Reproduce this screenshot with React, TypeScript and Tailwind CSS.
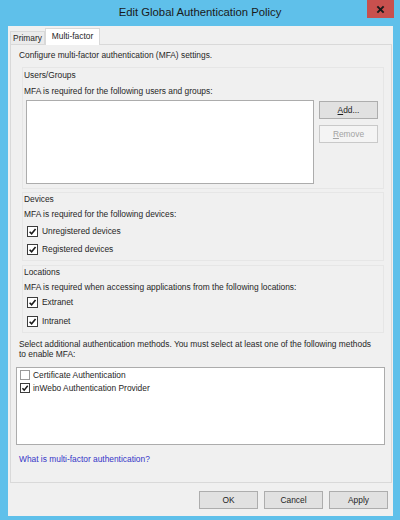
import React from 'react';

const Check: React.FC<{ checked: boolean; size?: string; light?: boolean }> = ({ checked, size = 'w-[11px] h-[11px]', light }) => (
  <span
    className={`${size} shrink-0 bg-white border ${light && !checked ? 'border-[#9a9a9a]' : 'border-[#3c3c3c]'} flex items-center justify-center`}
  >
    {checked && (
      <svg viewBox="0 0 10 10" className="w-full h-full">
        <path d="M1.8 5.2 L4 7.6 L8.4 2.2" fill="none" stroke="#1a1a1a" strokeWidth="1.8" />
      </svg>
    )}
  </span>
);

const Btn: React.FC<{ children: React.ReactNode; cls?: string }> = ({ children, cls = '' }) => (
  <div className={`h-[18px] w-[59px] flex items-center justify-center border border-[#adadad] bg-[#e1e1e1] text-[#1e1e1e] ${cls}`}>
    {children}
  </div>
);

const CheckRow: React.FC<{ label: string; cls?: string }> = ({ label, cls = '' }) => (
  <div className={`h-[16px] flex items-center pl-[3px] ${cls}`}>
    <Check checked />
    <span className="ml-[4px]">{label}</span>
  </div>
);

export default function App() {
  return (
    <div className="w-[400px] h-[520px] bg-[#5fc0ea] flex flex-col overflow-hidden font-['Liberation_Sans',Arial,sans-serif] text-[8.4px] leading-[12px] text-[#262626]">
      {/* title bar */}
      <div className="relative h-[26px] shrink-0 flex items-center justify-center">
        <span className="text-[11.3px] text-[#1a1a1a] leading-none">Edit Global Authentication Policy</span>
        <div className="absolute top-0 right-[6px] w-[27px] h-[18px] bg-[#c8504e] flex items-center justify-center">
          <svg viewBox="0 0 10 10" className="w-[9px] h-[9px]">
            <path d="M1.5 1.5 L8.5 8.5 M8.5 1.5 L1.5 8.5" stroke="#1a1a1a" strokeWidth="2.2" />
          </svg>
        </div>
      </div>

      {/* client */}
      <div className="flex-1 ml-[8px] mr-[7px] mb-[4px] bg-[#f0f0f0] flex flex-col">
        {/* tabs */}
        <div className="mt-[2px] h-[16px] flex items-end pl-[2px]">
          <div className="h-[13px] w-[35px] border border-b-0 border-[#d9d9d9] bg-[#ebebeb] flex items-center justify-center">
            Primary
          </div>
          <div className="relative z-10 -mb-px h-[17px] w-[55px] border border-b-0 border-[#d9d9d9] bg-white flex items-center justify-center pb-[2px]">
            Multi-factor
          </div>
        </div>

        {/* panel */}
        <div className="h-[439px] ml-[2px] mr-[1px] border border-[#d9d9d9] bg-[#f0f0f0] flex flex-col">
          <div className="mt-[4px] ml-[8px]">Configure multi-factor authentication (MFA) settings.</div>

          {/* Users/Groups */}
          <div className="mt-[6px] ml-[11px] mr-[7px] border border-[#e6e6e6] h-[122px] flex flex-col pl-[1px]">
            <div className="mt-[1px]">Users/Groups</div>
            <div className="mt-[4px]">MFA is required for the following users and groups:</div>
            <div className="mt-[3px] flex pl-[2px]">
              <div className="w-[288px] h-[84px] bg-white border border-[#acacac]" />
              <div className="ml-[5px] flex flex-col">
                <Btn cls="mt-[1px] h-[17px] border-[#7a7a7a]">
                  <span>
                    <span className="underline">A</span>dd...
                  </span>
                </Btn>
                <Btn cls="mt-[6px] h-[17px] bg-[#f4f4f4] border-[#c9c9c9] text-[#a3a3a3]">
                  <span>
                    <span className="underline">R</span>emove
                  </span>
                </Btn>
              </div>
            </div>
          </div>

          {/* Devices */}
          <div className="mt-[3px] ml-[11px] mr-[7px] border border-[#e6e6e6] h-[69px] flex flex-col pl-[1px]">
            <div>Devices</div>
            <div className="mt-[3px]">MFA is required for the following devices:</div>
            <CheckRow label="Unregistered devices" cls="mt-[3px]" />
            <CheckRow label="Registered devices" cls="mt-[2px]" />
          </div>

          {/* Locations */}
          <div className="mt-[4px] ml-[11px] mr-[7px] border border-[#e6e6e6] h-[68px] flex flex-col pl-[1px]">
            <div>Locations</div>
            <div className="mt-[3px]">MFA is required when accessing applications from the following locations:</div>
            <CheckRow label="Extranet" cls="mt-[1px]" />
            <CheckRow label="Intranet" cls="mt-[3px]" />
          </div>

          <div className="mt-[6px] ml-[8px] mr-[4px] leading-[10px] whitespace-nowrap">
            Select additional authentication methods. You must select at least one of the following methods
            <br />
            to enable MFA:
          </div>

          <div className="mt-[8px] ml-[5px] w-[369px] h-[78px] bg-white border border-[#acacac] pl-[3px]">
            <div className="h-[13px] flex items-center">
              <Check checked={false} light size="w-[10px] h-[10px]" />
              <span className="ml-[3px]">Certificate Authentication</span>
            </div>
            <div className="h-[13px] flex items-center">
              <Check checked size="w-[10px] h-[10px]" />
              <span className="ml-[3px]">inWebo Authentication Provider</span>
            </div>
          </div>

          <div className="mt-[8px] ml-[8px] text-[#3535c8]">What is multi-factor authentication?</div>
        </div>

        {/* bottom buttons */}
        <div className="mt-[8px] flex justify-end gap-[6px] mr-[5px]">
          <Btn>OK</Btn>
          <Btn>Cancel</Btn>
          <Btn>Apply</Btn>
        </div>
      </div>
    </div>
  );
}
